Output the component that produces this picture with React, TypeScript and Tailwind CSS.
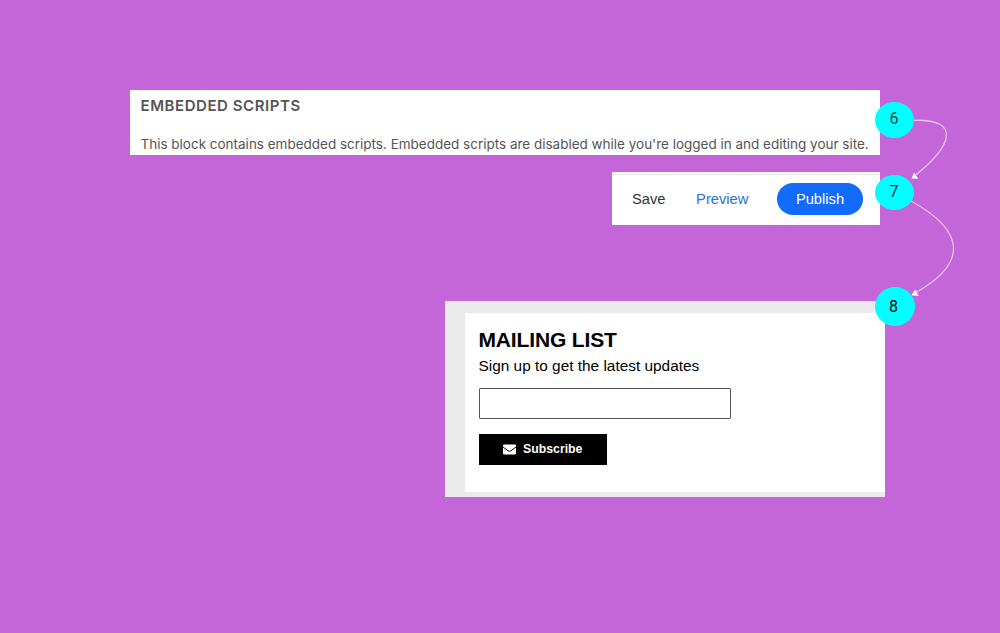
import React from 'react';

const Badge: React.FC<{ label: string; className: string }> = ({ label, className }) => (
  <span
    className={`absolute flex items-center justify-center rounded-[50%] bg-[#00ffff] font-['Roboto',sans-serif] text-base leading-none ${className}`}
  >
    {label}
  </span>
);

const EmbeddedScripts: React.FC = () => (
  <section className="relative mr-[5px] flex h-[65px] w-[750px] flex-col justify-between bg-white pb-px pl-[10.5px] pt-[6px] font-['Inter',sans-serif] text-[#555]">
    <h2 className="text-[15px] font-semibold leading-5 tracking-[0.56px] whitespace-nowrap">EMBEDDED SCRIPTS</h2>
    <p className="text-[13.5px] leading-5 tracking-[-0.01px] whitespace-nowrap">
      This block contains embedded scripts. Embedded scripts are disabled while you're logged in and editing your site.
    </p>
    <Badge label="6" className="-right-[34px] top-3 h-[36px] w-[39px] pb-[3px] pr-px text-[#0a4a4a]" />
  </section>
);

const PublishBar: React.FC = () => (
  <section className="relative mr-[5px] flex h-[53px] w-[268px] flex-col bg-white pt-[2px] font-['Liberation_Sans',Arial,sans-serif] text-[14.7px]">
    <div className="h-px bg-[#efe6f1]" />
    <div className="flex grow items-center justify-between pb-[3px] pl-5 pr-[17px]">
      <button className="pt-px text-[#333]">Save</button>
      <button className="pl-[2px] pt-px text-[#2b6fd6]">Preview</button>
      <button className="h-8 w-[86px] rounded-full bg-[#136bfb] pt-px text-white">Publish</button>
    </div>
    <Badge label="7" className="-right-[34px] top-[3px] h-[35px] w-[39px] pb-px pr-px text-[#0a3434]" />
  </section>
);

const MailingList: React.FC = () => (
  <section className="relative h-[196px] w-[440px] bg-[#ebebeb] pb-[5px] pl-5 pt-3 font-['Liberation_Sans',Arial,sans-serif] text-black">
    <div className="flex h-full flex-col items-start bg-white pl-[13.5px] pt-[13px]">
      <h2 className="text-[21px] font-bold leading-7 tracking-[-0.15px]">MAILING LIST</h2>
      <p className="pt-[2px] text-[15.4px] leading-5">Sign up to get the latest updates</p>
      <div className="flex flex-col items-start gap-[15px] pt-3">
        <input
          type="email"
          aria-label="Email"
          className="h-[31px] w-[252.5px] rounded-[1px] border border-[#555] bg-white px-2"
        />
        <button className="flex h-[31px] w-[128.5px] items-center gap-[7px] bg-black pl-[24.5px] text-[12.3px] font-bold text-white">
          <svg className="h-[11px] w-[13px]" viewBox="0 0 13 11">
            <rect y="0.5" width="13" height="10" rx="1.2" fill="white" />
            <path d="M0 3L5 6.8Q6.5 7.8 8 6.8L13 3" fill="none" stroke="black" strokeWidth="1" />
          </svg>
          Subscribe
        </button>
      </div>
    </div>
    <Badge label="8" className="-right-[30px] -top-[14px] h-[39px] w-[40px] pr-[3px] text-black" />
  </section>
);

// Connectors between the numbered steps
const Arrows: React.FC = () => (
  <svg className="pointer-events-none absolute inset-0" width="1000" height="633" viewBox="0 0 1000 633">
    <g fill="none" stroke="#e9c0f0" strokeWidth="1.3">
      <path d="M914 120.3C962 119 952 146 915 175.5" />
      <path d="M911 201C967 232 967 264 915 293" />
    </g>
    <g fill="white">
      <path d="M911.5 178.5L914 172.5L918.3 178.8Z" />
      <path d="M911.5 295.3L915.2 289.5L918.7 296Z" />
    </g>
  </svg>
);

const App: React.FC = () => {
  return (
    <main className="relative flex h-[633px] w-[1000px] flex-col items-end gap-[76px] overflow-hidden bg-[#c466d9] pr-[115px] pt-[90px]">
      <div className="flex flex-col items-end gap-[17px]">
        <EmbeddedScripts />
        <PublishBar />
      </div>
      <MailingList />
      <Arrows />
    </main>
  );
};

export default App;
